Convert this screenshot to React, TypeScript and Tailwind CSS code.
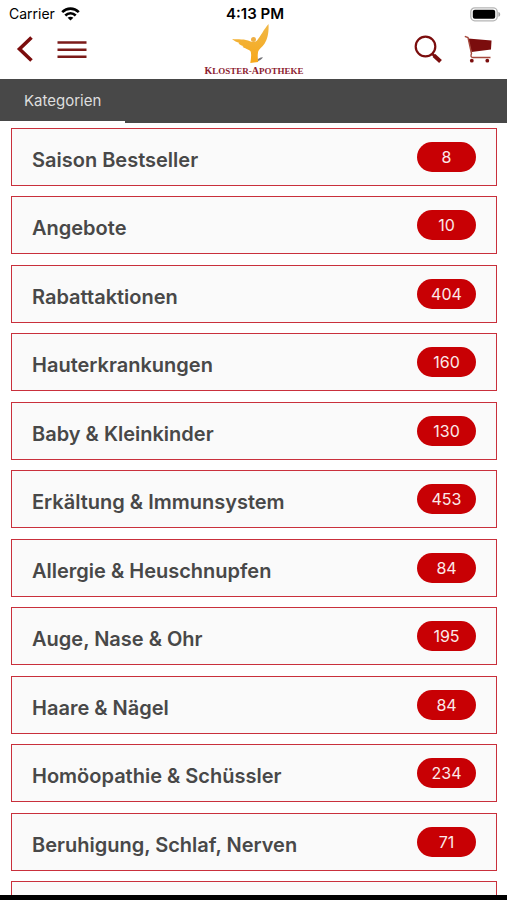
type Category = {
  name: string;
  count?: number;
};

const categories: Category[] = [
  { name: "Saison Bestseller", count: 8 },
  { name: "Angebote", count: 10 },
  { name: "Rabattaktionen", count: 404 },
  { name: "Hauterkrankungen", count: 160 },
  { name: "Baby & Kleinkinder", count: 130 },
  { name: "Erkältung & Immunsystem", count: 453 },
  { name: "Allergie & Heuschnupfen", count: 84 },
  { name: "Auge, Nase & Ohr", count: 195 },
  { name: "Haare & Nägel", count: 84 },
  { name: "Homöopathie & Schüssler", count: 234 },
  { name: "Beruhigung, Schlaf, Nerven", count: 71 },
  { name: "" },
];

function StatusBar() {
  return (
    <div className="grid h-7 grid-cols-3 items-center pl-[9px] pr-[6px] text-sm text-black">
      <div className="flex items-center gap-1.5">
        <span>Carrier</span>
        <svg width="19" height="14" viewBox="0 0 19 14" fill="none" stroke="#000" strokeWidth="2.6">
          <path d="M1.2 5.2C6 .4 13 .4 17.8 5.2" />
          <path d="M4.3 8.5c3-3 7.4-3 10.4 0" />
          <path d="M9.5 13.6 6.6 10.8c1.7-1.5 4.1-1.5 5.8 0z" fill="#000" stroke="none" />
        </svg>
      </div>
      <span className="text-center text-[15px] font-semibold">4:13 PM</span>
      <svg className="justify-self-end" width="31" height="15" viewBox="0 0 31 15">
        <rect x=".8" y=".8" width="26.4" height="13" rx="4" fill="#fff" stroke="#b5b5b5" strokeWidth="1.3" />
        <rect x="2.8" y="2.8" width="22.4" height="9" rx="2" fill="#000" />
        <path d="M28.4 5v4.8c1-.3 1.8-1.2 1.8-2.4S29.4 5.3 28.4 5z" fill="#a5a5a5" />
      </svg>
    </div>
  );
}

function Logo() {
  return (
    <a href="#" className="flex flex-col items-center">
      <svg width="44" height="40" viewBox="0 0 44 40">
        <defs>
          <linearGradient id="wing" x1="0" y1="0" x2="0" y2="1">
            <stop offset="0" stopColor="#f0b848" />
            <stop offset="1" stopColor="#f7a81a" />
          </linearGradient>
        </defs>
        <path d="M23.5 37.5c2-2.7 4.3-4.3 7.5-4.300-1.200 2.300-3.500 3.800-7.500 4.300z" fill="#77777c" />
        <path
          d="M0 15C6 15.500 13 14.800 18 17.200C20 18.400 23.500 18.200 25 16.500C28.500 12.500 32 5 36.500 0C37 7 35.800 15 32.500 19.800C30 23.500 26.500 25 26 28.500C25.500 31.500 25.800 34.500 26.200 38L18.300 39C19 35 19.500 31 18.800 28C18 25.500 14.500 25.500 10.500 22.800L11.500 22C9.500 21.800 7.500 20.500 6.500 19.500L7.500 19C5 18.300 2 17 0 15Z"
          fill="url(#wing)"
        />
        <circle cx="21.500" cy="15.500" r="2.500" fill="#eeae45" />
      </svg>
      <span className="font-['Liberation_Serif',serif] text-[9px] leading-[14px] font-bold text-[#8c2130]">
        <span className="text-[10px]">K</span>LOSTER-<span className="text-[10px]">A</span>POTHEKE
      </span>
    </a>
  );
}

function NavBar() {
  return (
    <header className="grid h-[51px] grid-cols-[1fr_auto_1fr] items-start pl-4 pr-[15px]">
      <div className="flex items-center gap-[22px] pt-[7px]">
        <button aria-label="Zurück">
          <svg width="19" height="28" viewBox="0 0 19 28" fill="none" stroke="#7b0d0d" strokeWidth="3.6">
            <path d="M15.5 2.5 3.5 14l12 11.500" />
          </svg>
        </button>
        <button aria-label="Menü">
          <svg width="30" height="28" viewBox="0 0 30 28" stroke="#7b1a18" strokeWidth="2.4">
            <path d="M.5 7.500h29M.5 14.700h29M.5 21.800h29" />
          </svg>
        </button>
      </div>
      <div className="-mt-1">
        <Logo />
      </div>
      <div className="flex items-center justify-end gap-[22px] pt-[7px]">
        <button aria-label="Suche">
          <svg width="28" height="28" viewBox="0 0 28 28" fill="none" stroke="#7b0d0d">
            <circle cx="11.500" cy="11.500" r="9.800" strokeWidth="2.200" />
            <path d="m18.500 19 2.500 2.500" strokeWidth="2.500" />
            <path d="m20 20.500 6.500 6" strokeWidth="4" />
          </svg>
        </button>
        <button aria-label="Warenkorb">
          <svg width="28" height="28" viewBox="0 0 28 28">
            <path d="M4 3.500 27.500 5.500 27 14.500 7.500 17z" fill="#7b0d0d" />
            <path
              d="M.8 1.300 4 2.600 7.500 18.500c-1.200 2.800-.3 4 1.500 4h17.500"
              fill="none"
              stroke="#a5483c"
              strokeWidth="1.400"
            />
            <circle cx="7.800" cy="25.700" r="1.900" fill="#7b0d0d" />
            <circle cx="23.300" cy="25.700" r="1.900" fill="#7b0d0d" />
          </svg>
        </button>
      </div>
    </header>
  );
}

function CategoryRow({ name, count }: Category) {
  return (
    <li>
      <a
        href="#"
        className="
          flex
          h-[58px]
          items-center
          justify-between
          border
          border-[#c9303c]
          bg-[#fafafa]
          px-5
        "
      >
        <span className="pt-[6px] text-xl leading-6 font-semibold text-[#484848]">
          {name}
        </span>
        <span
          className="
            flex
            h-[30px]
            w-[59px]
            items-center
            justify-center
            rounded-full
            bg-[#c80004]
            text-base
            text-[#fbe9e9]
          "
        >
          {count}
        </span>
      </a>
    </li>
  );
}

export default function App() {
  return (
    <div className="flex h-screen flex-col overflow-hidden bg-white font-['Inter',sans-serif]">
      <StatusBar />
      <NavBar />

      <nav className="flex h-11 shrink-0 bg-[#484848]">
        <a
          href="#"
          className="
            border-b-2
            border-white
            px-6
            pt-[10px]
            text-[15px]
            leading-6
            text-[#dedede]
          "
        >
          Kategorien
        </a>
      </nav>

      <main className="min-h-0 flex-1 overflow-hidden pt-[5px] pr-[10px] pl-[11px]">
        <ul className="grid auto-rows-[58px_59px] gap-y-[10px]">
          {categories.map((category, index) => (
            <CategoryRow key={index} {...category} />
          ))}
        </ul>
      </main>

      <div className="h-[5px] shrink-0 bg-black" />
    </div>
  );
}
